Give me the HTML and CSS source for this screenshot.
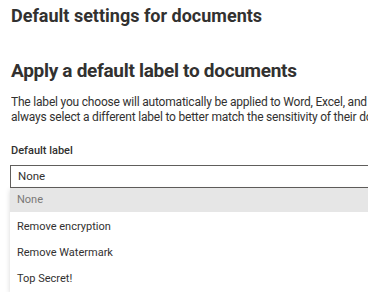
FILE: index.html
```
<!DOCTYPE html>
<html lang="en">
    <head>
        <title>Default settings for documents</title>
        <link rel="stylesheet" href="styles.css">
    </head>
    <body>
        <h1 class="page-title">Default settings for documents</h1>
        <h2 class="section-title">Apply a default label to documents</h2>
        <p class="desc">The label you choose will automatically be applied to Word, Excel, and PowerPoint files. Users can<br>always select a different label to better match the sensitivity of their documents.</p>
        <div class="field">
            <div class="field-label">Default label</div>
            <div class="select">None</div>
            <ul class="options">
                <li class="option selected">None</li>
                <li class="option">Remove encryption</li>
                <li class="option">Remove Watermark</li>
                <li class="option">Top Secret!</li>
            </ul>
        </div>
    </body>
</html>
```
FILE: styles.css
```
body {
    margin: 0;
    padding: 0 0 0 11px;
    width: 420px;
    background-color: #FFF;
    color: #323130;
    font-family: Roboto, "Open Sans", sans-serif;
    overflow: hidden;
}
.page-title {
    margin: 4px 0 0;
    font-size: 18px;
    font-weight: 700;
    line-height: 24px;
}
.section-title {
    margin: 29px 0 0;
    font-size: 19px;
    font-weight: 700;
    line-height: 28px;
    letter-spacing: -0.3px;
}
.desc {
    margin: 10px 0 0;
    font-size: 12px;
    line-height: 15px;
    letter-spacing: -0.2px;
    white-space: nowrap;
    overflow: hidden;
    height: 30px;
}
.field {
    margin-top: 18px;
}
.field-label {
    font-size: 11px;
    font-weight: 500;
    line-height: 16px;
}
.select {
    margin: 6px 0 0 -1px;
    height: 21px;
    border: 1px solid #605E5C;
    border-right: none;
    padding-left: 7px;
    font-size: 11.5px;
    line-height: 21px;
}
.options {
    list-style: none;
    margin: 0 0 0 -1px;
    padding: 0 0 2px;
    background-color: #FFF;
    box-shadow: 0 2px 5px rgba(0, 0, 0, 0.16);
}
.option {
    height: 22px;
    padding: 4px 0 0 7px;
    font-size: 11px;
    line-height: 22px;
    color: #323130;
}
.option.selected {
    height: 24px;
    padding-top: 0;
    line-height: 24px;
    background-color: #E6E6E6;
    color: #7A7876;
}
```
